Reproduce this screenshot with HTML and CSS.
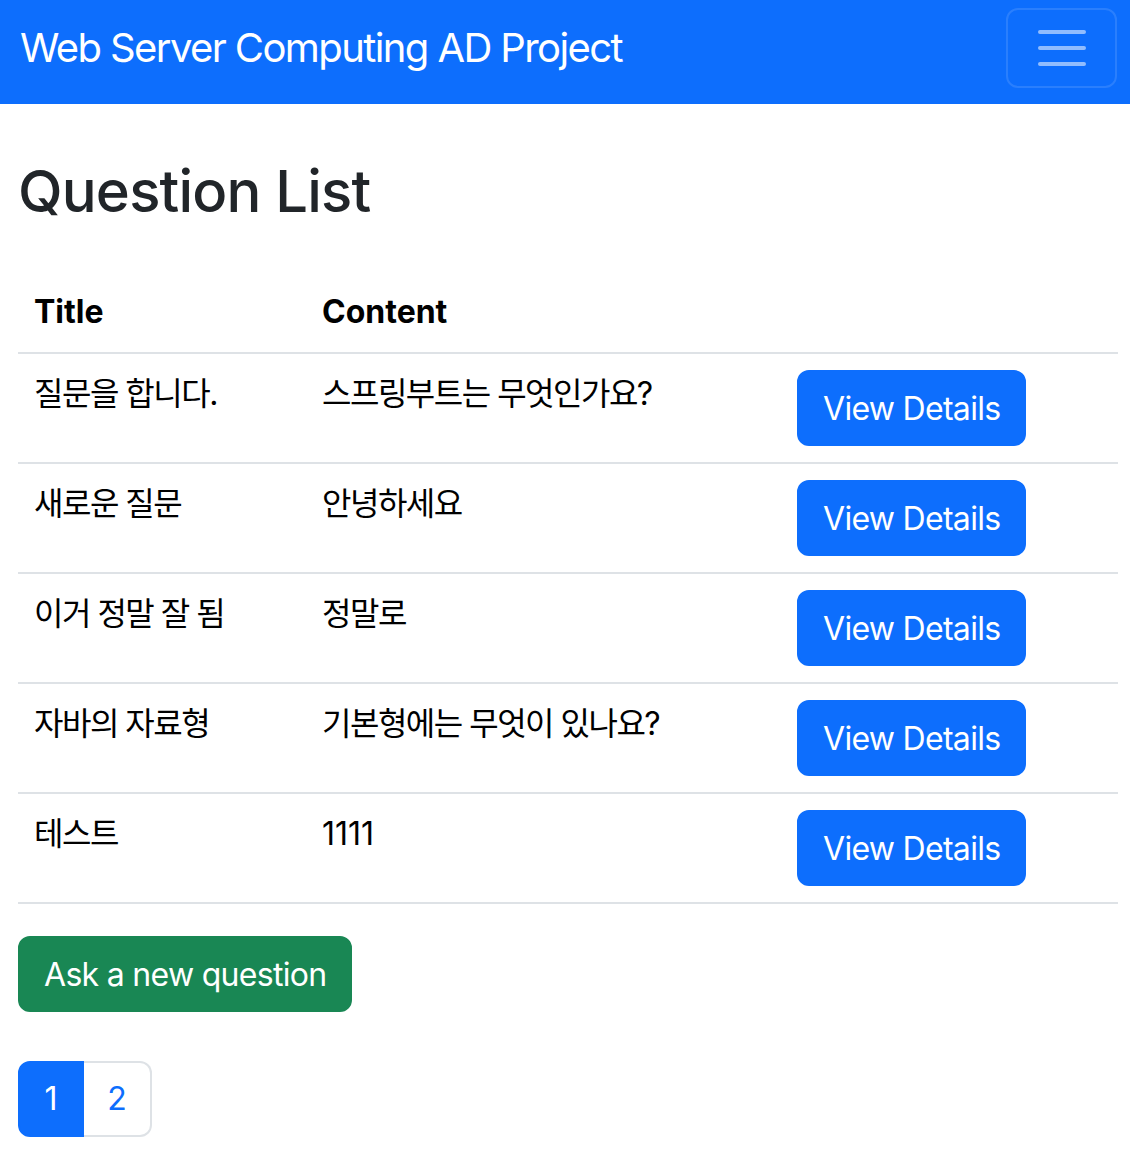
FILE: index.html
```html
<!DOCTYPE html>
<html lang="ko">
<head>
<meta charset="utf-8">
<title>Question List</title>
<link rel="stylesheet" href="styles.css">
</head>
<body>
<nav class="navbar">
  <a class="brand" href="#">Web Server Computing AD Project</a>
  <button class="toggler" type="button" aria-label="Toggle navigation">
    <svg class="toggler-icon" viewBox="0 0 30 30" width="60" height="60">
      <path d="M4 7h22M4 15h22M4 23h22" stroke="rgba(255,255,255,0.55)" stroke-width="2" stroke-linecap="round" fill="none"/>
    </svg>
  </button>
</nav>
<main class="container">
  <h2 class="page-title">Question List</h2>
  <table class="qtable">
    <thead>
      <tr><th class="c1">Title</th><th class="c2">Content</th><th class="c3"></th></tr>
    </thead>
    <tbody>
      <tr><td>질문을 합니다.</td><td>스프링부트는 무엇인가요?</td><td><a class="btn btn-primary" href="#">View Details</a></td></tr>
      <tr><td>새로운 질문</td><td>안녕하세요</td><td><a class="btn btn-primary" href="#">View Details</a></td></tr>
      <tr><td>이거 정말 잘 됨</td><td>정말로</td><td><a class="btn btn-primary" href="#">View Details</a></td></tr>
      <tr><td>자바의 자료형</td><td>기본형에는 무엇이 있나요?</td><td><a class="btn btn-primary" href="#">View Details</a></td></tr>
      <tr><td>테스트</td><td class="num">1111</td><td><a class="btn btn-primary" href="#">View Details</a></td></tr>
    </tbody>
  </table>
  <a class="btn btn-success" href="#">Ask a new question</a>
  <ul class="pagination">
    <li class="page-item active"><a class="page-link" href="#">1</a></li>
    <li class="page-item"><a class="page-link" href="#">2</a></li>
  </ul>
</main>
</body>
</html>
```
FILE: styles.css
```css
* { box-sizing: border-box; }
html, body {
  margin: 0;
  padding: 0;
  background: #fff;
}
body {
  font-family: Inter, "Noto Sans CJK KR", sans-serif;
  font-size: 32px;
  line-height: 48px;
  color: #212529;
}
a { text-decoration: none; }

.navbar {
  height: 104px;
  background: #0d6efd;
  display: flex;
  justify-content: space-between;
  align-items: flex-start;
  padding: 8px 13px 0 20px;
}
.brand {
  color: #fff;
  font-size: 40px;
  line-height: 80px;
  letter-spacing: -1.6px;
}
.toggler {
  width: 111px;
  height: 80px;
  padding: 0;
  background: transparent;
  border: 2px solid rgba(255,255,255,0.12);
  border-radius: 12px;
  display: flex;
  align-items: center;
  justify-content: center;
}
.toggler-icon { display: block; }

.container {
  padding: 0 12px 0 18px;
}
.page-title {
  font-size: 58px;
  font-weight: 500;
  line-height: 70px;
  margin: 52px 0 0 0;
  letter-spacing: -0.8px;
}
.qtable {
  width: 1100px;
  border-collapse: collapse;
  margin-top: 46px;
  margin-bottom: 32px;
  color: #000;
}
.qtable th, .qtable td {
  padding: 16px;
  text-align: left;
  vertical-align: top;
  border-bottom: 2px solid #dee2e6;
  line-height: 48px;
}
.qtable th { font-weight: 700; }
.qtable td { letter-spacing: -1.5px; }
.qtable td.num { letter-spacing: 0; }
.c1 { width: 288px; }
.c2 { width: 475px; }
.c3 { width: 337px; }

.btn {
  display: inline-block;
  font-size: 32px;
  line-height: 48px;
  padding: 13px 24px 11px;
  border: 2px solid transparent;
  border-radius: 12px;
  color: #fff;
  letter-spacing: -0.7px;
}
.btn-primary { background: #0d6efd; border-color: #0d6efd; }
.btn-success { background: #198754; border-color: #198754; }

.pagination {
  list-style: none;
  padding: 0;
  margin: 49px 0 0 0;
  display: flex;
}
.page-link {
  display: block;
  font-size: 32px;
  line-height: 48px;
  padding: 12px 0;
  text-align: center;
  color: #0d6efd;
  border: 2px solid #dee2e6;
  background: #fff;
}
.page-item:first-child .page-link { width: 66px; border-radius: 12px 0 0 12px; }
.page-item:last-child .page-link { width: 68px; border-left: 0; border-radius: 0 12px 12px 0; }
.page-item.active .page-link {
  background: #0d6efd;
  border-color: #0d6efd;
  color: #fff;
}
```
